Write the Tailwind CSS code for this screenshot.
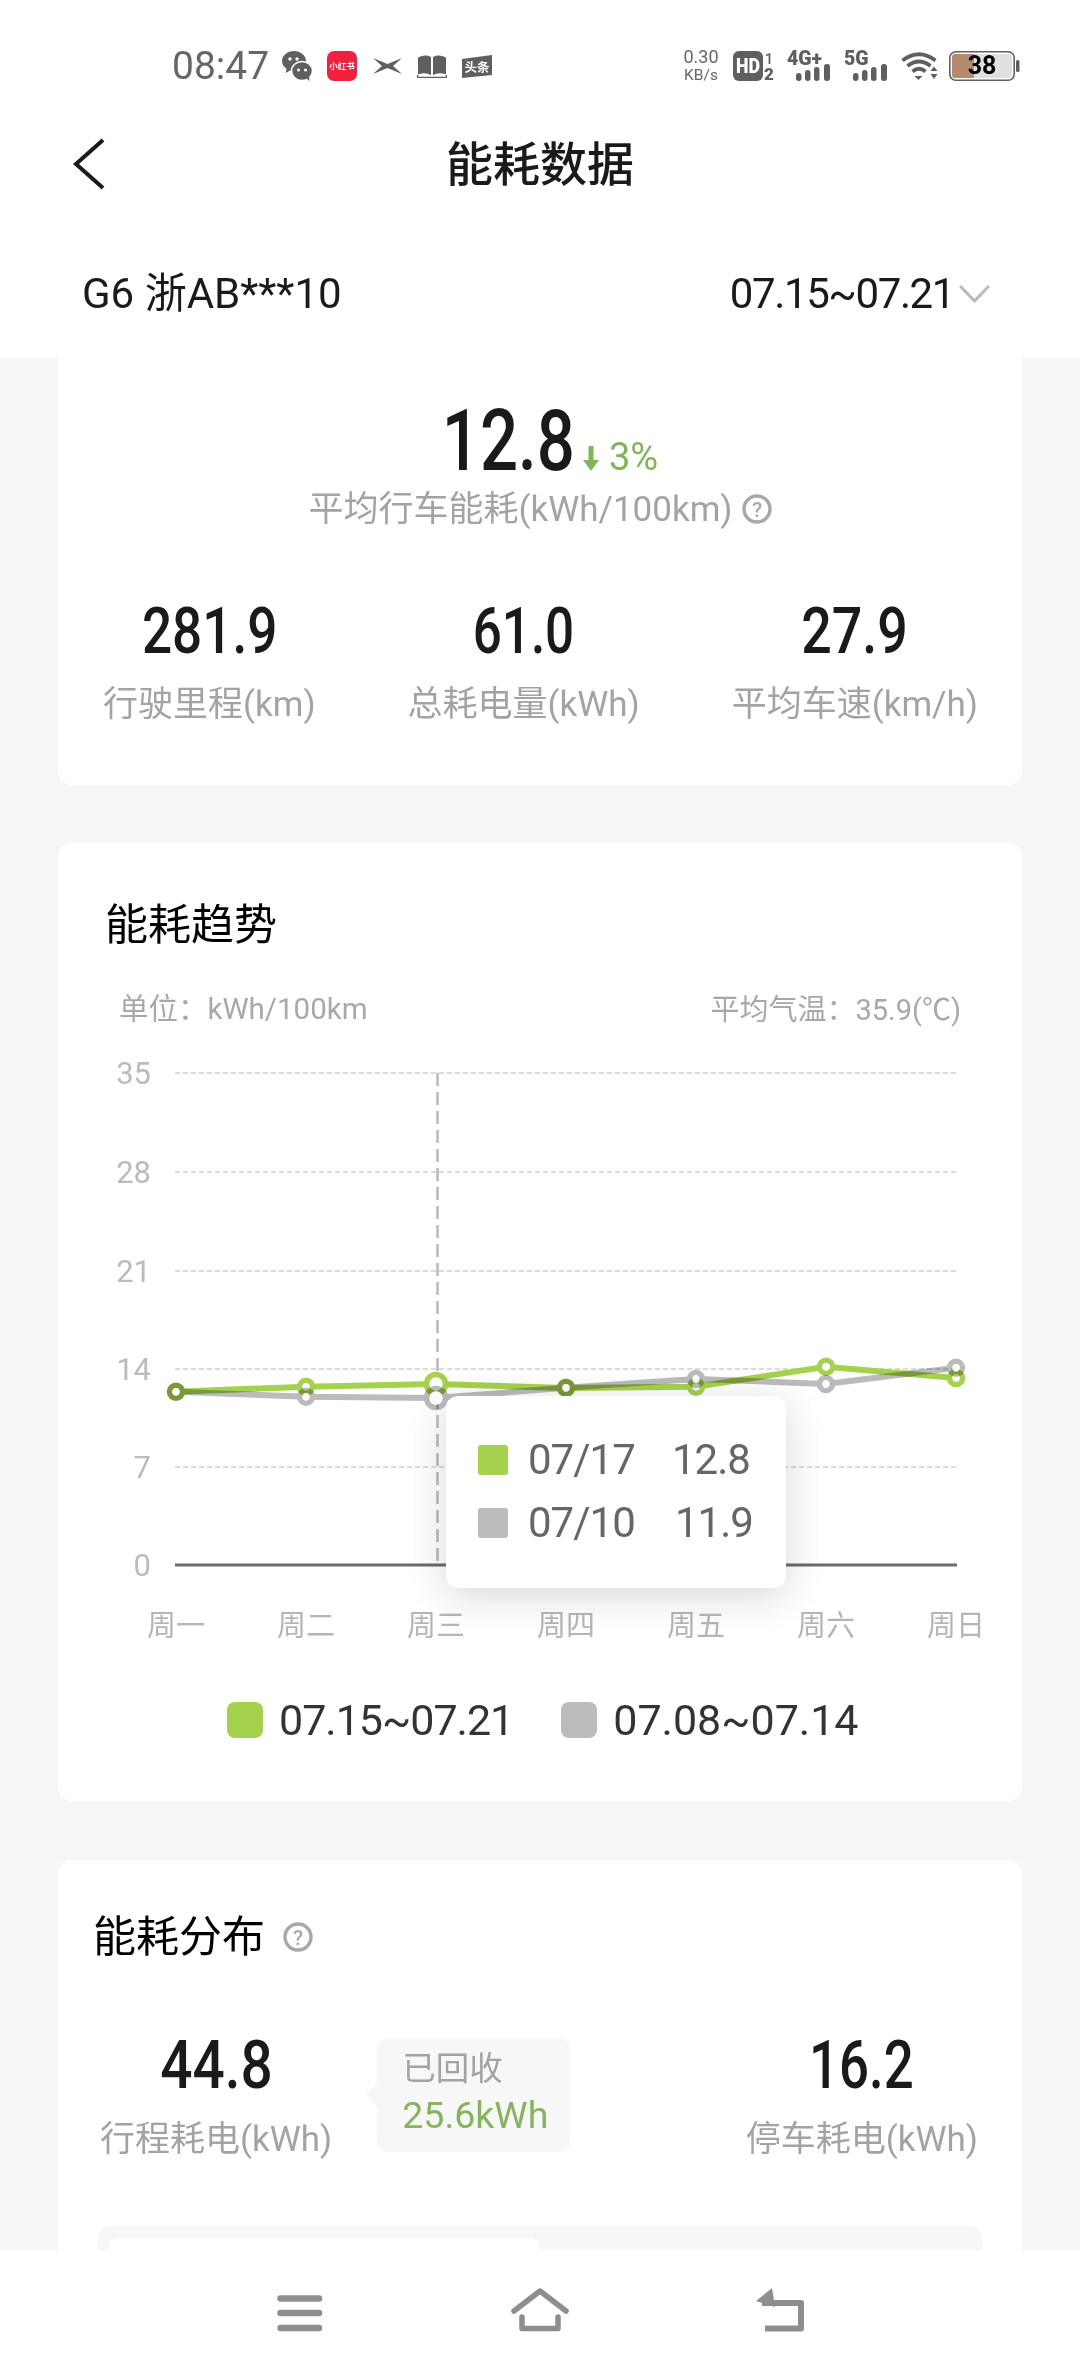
<!DOCTYPE html>
<html lang="zh-CN">
<head>
  <meta charset="UTF-8">
  <title>能耗数据</title>
  <script src="https://cdn.jsdelivr.net/npm/@tailwindcss/browser@4"></script>
</head>
<body class="bg-[#f6f6f6]">
  <div class="relative w-[1080px] h-[2376px] overflow-hidden flex flex-col bg-[#f6f6f6] text-[#1a1a1a] font-[Roboto,'Noto_Sans_CJK_SC',sans-serif]">

    <!-- header -->
    <header class="bg-white h-[358px] shrink-0">
      <!-- status bar -->
      <div class="h-[132px] flex items-center pl-[172px] pr-[60px]">
        <span class="text-[39px] leading-none text-[#666] w-[95px] whitespace-nowrap">08:47</span>
        <svg class="ml-[15px]" width="30" height="30" viewBox="0 0 30 30"><path fill="#5f5f5f" d="M12 0C5.4 0 0 4.5 0 10c0 3.2 1.8 6 4.6 7.8L3.6 22l4.6-2.5c1.2.3 2.500.5 3.800.5 6.600 0 12-4.500 12-10S18.600 0 12 0z"/><ellipse cx="20" cy="20" rx="10.500" ry="9.500" fill="#5f5f5f" stroke="#fff" stroke-width="1.500"/><path fill="#5f5f5f" d="M24 27l3.500 3-.5-5z"/><circle cx="8" cy="8" r="1.700" fill="#fff"/><circle cx="15" cy="8" r="1.700" fill="#fff"/><circle cx="16.500" cy="19" r="1.500" fill="#fff"/><circle cx="23.500" cy="19" r="1.500" fill="#fff"/></svg>
        <div class="ml-[15px] w-[30px] h-[30px] rounded-[7px] bg-[#f0213f] flex items-center justify-center text-white text-[8.500px] font-bold leading-none whitespace-nowrap">小红书</div>
        <svg class="ml-[16px]" width="29" height="16" viewBox="0 0 29 16"><path fill="#5f5f5f" d="M0 0l14.500 6L29 0l-9 8 9 8-14.500-6L0 16l9-8z"/></svg>
        <svg class="ml-[15px]" width="30" height="25" viewBox="0 0 30 25"><path fill="#5f5f5f" d="M1 3.500Q8 0 14 3v18q-6-3-13-.5zM16 3q6-3 13 .5v17q-7-2.500-13 .5z"/><path fill="none" stroke="#5f5f5f" stroke-width="1.200" d="M.6 21v2.400h28.800V21"/></svg>
        <svg class="ml-[15px]" width="30" height="23" viewBox="0 0 30 23"><path fill="#5f5f5f" d="M0 4L30 0v20L0 23z"/><text x="15" y="17" text-anchor="middle" font-size="12.500" font-weight="700" fill="#fff">头条</text></svg>

        <div class="ml-auto flex items-center">
          <div class="w-[36px] flex flex-col items-center text-[#666] leading-none whitespace-nowrap">
            <span class="text-[18px]">0.30</span>
            <span class="text-[15.500px] mt-[2px]">KB/s</span>
          </div>
          <svg class="ml-[14px] -mb-[6px]" width="42" height="36" viewBox="0 0 42 36"><rect width="30" height="30" rx="6" fill="#5f5f5f"/><text x="15" y="21.500" text-anchor="middle" font-size="20" font-weight="900" fill="#fff" textLength="24" lengthAdjust="spacingAndGlyphs">HD</text><text x="36" y="13" text-anchor="middle" font-size="15" font-weight="500" fill="#5f5f5f">1</text><text x="36" y="29" text-anchor="middle" font-size="17" font-weight="900" fill="#5f5f5f">2</text></svg>
          <svg class="ml-[12px] -mt-[8px]" width="44" height="38" viewBox="0 -8 44 38"><text x="0" y="14" font-size="19.500" font-weight="900" fill="#5f5f5f">4G+</text><g fill="#5f5f5f"><rect x="9" y="22" width="5.500" height="8" rx="2.700"/><rect x="18" y="19" width="5.500" height="11" rx="2.700"/><rect x="27" y="16" width="5.500" height="14" rx="2.700"/><rect x="37" y="13" width="6" height="17" rx="2.700"/></g></svg>
          <svg class="ml-[13px] -mt-[8px]" width="44" height="38" viewBox="0 -8 44 38"><text x="0" y="14" font-size="19.500" font-weight="900" fill="#5f5f5f">5G</text><g fill="#5f5f5f"><rect x="9" y="22" width="5.500" height="8" rx="2.700"/><rect x="18" y="19" width="5.500" height="11" rx="2.700"/><rect x="27" y="16" width="5.500" height="14" rx="2.700"/><rect x="37" y="13" width="6" height="17" rx="2.700"/></g></svg>
          <svg class="ml-[13px]" width="37" height="28" viewBox="0 0 37 28"><g fill="none" stroke="#5f5f5f" stroke-width="3.800"><path d="M1.500 8.500Q18-4 34.500 8.500"/><path d="M6.500 14Q18 5 29.500 14"/><path d="M11.500 19.500Q18 14 24.500 19.500"/></g><path fill="#5f5f5f" d="M13.500 24h8l-4 4zM29.500 19l3.500-4.500 3.500 4.500zM29.500 22h7l-3.500 5z"/></svg>
          <svg class="ml-[11px]" width="71" height="30" viewBox="0 0 71 30"><rect x=".8" y=".8" width="64.400" height="28.400" rx="6" fill="#fff" stroke="#5f5f5f" stroke-width="1.600"/><rect x="3" y="3" width="60" height="24" rx="3" fill="#e0e0e0"/><path fill="#b58a6f" d="M6 3h19v24H6a3 3 0 0 1-3-3V6a3 3 0 0 1 3-3z"/><rect x="67" y="9" width="3.500" height="12" rx="1.500" fill="#5f5f5f"/><text x="33" y="23" text-anchor="middle" font-size="25" font-weight="700" fill="#000">38</text></svg>
        </div>
      </div>

      <!-- title bar -->
      <div class="h-[64px] grid grid-cols-[1fr_auto_1fr] items-center">
        <svg class="ml-[72px]" width="34" height="52" viewBox="0 0 34 52"><path fill="none" stroke="#1a1a1a" stroke-width="4" d="M31 2L4 26l27 24"/></svg>
        <h1 class="text-[47px] leading-none font-medium">能耗数据</h1>
      </div>

      <!-- vehicle + date range -->
      <div class="mt-[68px] h-[60px] flex items-center justify-between pl-[82px] pr-[90px]">
        <span class="text-[42px] leading-none whitespace-nowrap">G6 浙AB***10</span>
        <div class="flex items-center gap-[5px]">
          <span class="text-[42px] leading-none tracking-[-1.400px] whitespace-nowrap">07.15~07.21</span>
          <svg width="31" height="18" viewBox="0 0 31 18"><path fill="none" stroke="#b8b8b8" stroke-width="3" d="M1 1l14.500 15L30 1"/></svg>
        </div>
      </div>
    </header>

    <main class="flex-1 overflow-hidden px-[58px]">
      <!-- summary -->
      <section class="bg-white rounded-b-[14px] pt-[46px] pb-[58px]">
        <div class="h-[77px] flex items-end pl-[386px] pb-[3px]">
          <div class="w-[128px] flex justify-center">
            <span class="shrink-0 text-[86px] leading-[74px] font-medium scale-x-[.78]">12.8</span>
          </div>
          <svg class="ml-[11px] mb-[7px]" width="16" height="25" viewBox="0 0 16 25"><path fill="#82b55a" d="M5.500 0h5v14H16l-8 11-8-11h5.500z"/></svg>
          <span class="ml-[10px] mb-[2px] text-[38px] leading-none text-[#82b55a]">3%</span>
        </div>
        <div class="mt-[6px] h-[44px] flex items-center justify-center gap-[9px] text-[#a3a3a3] text-[35px] leading-none whitespace-nowrap">
          <span>平均行车能耗(kWh/100km)</span>
          <svg width="30" height="30" viewBox="0 0 30 30"><circle cx="15" cy="15" r="13" fill="none" stroke="#a8a8a8" stroke-width="3.400"/><text x="15" y="22.500" text-anchor="middle" font-size="21" font-weight="500" fill="#a8a8a8">?</text></svg>
        </div>
        <div class="mt-[68px] flex justify-between pl-[45px] pr-[44px]">
          <div class="flex flex-col items-center">
            <div class="w-[133px] h-[66px] flex justify-center"><span class="shrink-0 text-[64px] leading-[66px] font-medium scale-x-[.83]">281.9</span></div>
            <span class="mt-[18px] h-[44px] text-[35px] leading-[44px] text-[#a3a3a3] whitespace-nowrap">行驶里程(km)</span>
          </div>
          <div class="flex flex-col items-center">
            <div class="w-[100px] h-[66px] flex justify-center"><span class="shrink-0 text-[64px] leading-[66px] font-medium scale-x-[.8]">61.0</span></div>
            <span class="mt-[18px] h-[44px] text-[35px] leading-[44px] text-[#a3a3a3] whitespace-nowrap">总耗电量(kWh)</span>
          </div>
          <div class="flex flex-col items-center">
            <div class="w-[104px] h-[66px] flex justify-center"><span class="shrink-0 text-[64px] leading-[66px] font-medium scale-x-[.84]">27.9</span></div>
            <span class="mt-[18px] h-[44px] text-[35px] leading-[44px] text-[#a3a3a3] whitespace-nowrap">平均车速(km/h)</span>
          </div>
        </div>
      </section>

      <!-- trend chart -->
      <section class="mt-[58px] bg-white rounded-[14px] pt-[57px] pb-[61px]">
        <h2 class="pl-[47px] h-[50px] text-[43px] leading-[50px] text-black">能耗趋势</h2>
        <div class="mt-[40px] h-[40px] flex items-center justify-between pl-[61px] pr-[61px] text-[29.500px] leading-none text-[#a8a8a8] whitespace-nowrap">
          <span>单位：kWh/100km</span>
          <span class="text-[29px]">平均气温：35.9(℃)</span>
        </div>
        <div class="relative mt-[20px] h-[620px]">
          <svg class="block" width="964" height="620" viewBox="58 1050 964 620">
            <g fill="none" stroke="#cfcfcf" stroke-width="1.500" stroke-dasharray="5 3">
              <path d="M175 1073H956M175 1172H956M175 1271H956M175 1369H956M175 1467H956"/>
            </g>
            <path d="M437.500 1073V1565" fill="none" stroke="#b9b9be" stroke-width="2.500" stroke-dasharray="13 6"/>
            <path d="M175 1565H957" fill="none" stroke="#6b6b70" stroke-width="3"/>
            <g font-size="31" fill="#bbbbbb" text-anchor="end">
              <text x="151" y="1084">35</text>
              <text x="151" y="1183">28</text>
              <text x="151" y="1282">21</text>
              <text x="151" y="1380">14</text>
              <text x="151" y="1478">7</text>
              <text x="151" y="1576">0</text>
            </g>
            <g font-size="29" fill="#b5b5b5" text-anchor="middle">
              <text x="176" y="1636">周一</text>
              <text x="306" y="1636">周二</text>
              <text x="436" y="1636">周三</text>
              <text x="566" y="1636">周四</text>
              <text x="696" y="1636">周五</text>
              <text x="826" y="1636">周六</text>
              <text x="956" y="1636">周日</text>
            </g>
            <g fill="none" stroke="#a5d24d" stroke-width="6">
              <path d="M176 1391.700L306 1386.700 436 1384 566 1388 696 1386.700 826 1366.700 956 1378"/>
              <g fill="#fff" stroke-width="5.500">
                <circle cx="176" cy="1391.700" r="6.500"/><circle cx="306" cy="1386.700" r="6.500"/><circle cx="436" cy="1384" r="9.500"/><circle cx="566" cy="1388" r="6.500"/><circle cx="696" cy="1386.700" r="6.500"/><circle cx="826" cy="1366.700" r="6.500"/><circle cx="956" cy="1378" r="6.500"/>
              </g>
            </g>
            <g class="mix-blend-multiply" fill="none" stroke="#bbbbbb" stroke-width="6">
              <path d="M176 1391.700L306 1396.700 436 1398 566 1387.700 696 1379 826 1384 956 1367.700"/>
              <g stroke-width="5.500">
                <circle cx="176" cy="1391.700" r="6.500"/><circle cx="306" cy="1396.700" r="6.500"/><circle cx="436" cy="1398" r="9.500"/><circle cx="566" cy="1387.700" r="6.500"/><circle cx="696" cy="1379" r="6.500"/><circle cx="826" cy="1384" r="6.500"/><circle cx="956" cy="1367.700" r="6.500"/>
              </g>
            </g>
            <g fill="#fff">
              <circle cx="176" cy="1391.700" r="3.700"/><circle cx="306" cy="1396.700" r="3.700"/><circle cx="436" cy="1398" r="6.700"/><circle cx="566" cy="1387.700" r="3.700"/><circle cx="696" cy="1379" r="3.700"/><circle cx="826" cy="1384" r="3.700"/><circle cx="956" cy="1367.700" r="3.700"/><circle cx="826" cy="1366.700" r="3.700"/>
            </g>
          </svg>
          <!-- tooltip -->
          <div class="absolute left-[388px] top-[346px] w-[340px] h-[192px] bg-white rounded-[12px] shadow-[0_8px_40px_rgba(0,0,0,0.16)] pt-[32px] pl-[32px] text-[42px] leading-[63px] text-[#666] tracking-[-1px] whitespace-nowrap">
            <div class="flex items-center h-[63px]">
              <span class="w-[30px] h-[30px] rounded-[3px] bg-[#a5d24d]"></span>
              <span class="ml-[20px] w-[144px]">07/17</span>
              <span>12.8</span>
            </div>
            <div class="flex items-center h-[63px]">
              <span class="w-[30px] h-[30px] rounded-[3px] bg-[#bbbbbb]"></span>
              <span class="ml-[20px] w-[147px]">07/10</span>
              <span>11.9</span>
            </div>
          </div>
        </div>
        <div class="mt-[30px] h-[40px] flex items-center pl-[169px] text-[43px] leading-none text-[#333] whitespace-nowrap">
          <span class="w-[36px] h-[36px] rounded-[8px] bg-[#a5d24d]"></span>
          <span class="ml-[16px] tracking-[-1px]">07.15~07.21</span>
          <span class="ml-[48px] w-[36px] h-[36px] rounded-[8px] bg-[#bbbbbb]"></span>
          <span class="ml-[16px]">07.08~07.14</span>
        </div>
      </section>

      <!-- distribution -->
      <section class="mt-[59px] bg-white rounded-t-[14px] pt-[52px] pb-[40px]">
        <div class="pl-[35px] h-[50px] flex items-center gap-[18px]">
          <h2 class="text-[43px] leading-[50px] text-black">能耗分布</h2>
          <svg width="30" height="30" viewBox="0 0 30 30"><circle cx="15" cy="15" r="13" fill="none" stroke="#a8a8a8" stroke-width="3.400"/><text x="15" y="22.500" text-anchor="middle" font-size="21" font-weight="500" fill="#a8a8a8">?</text></svg>
        </div>
        <div class="mt-[69px] flex items-start pl-[42px] pr-[44px]">
          <div class="flex flex-col items-center">
            <div class="w-[112px] h-[70px] flex justify-center"><span class="shrink-0 text-[66px] leading-[70px] font-medium scale-x-[.86]">44.8</span></div>
            <span class="mt-[17px] h-[44px] text-[35px] leading-[44px] text-[#a3a3a3] whitespace-nowrap">行程耗电(kWh)</span>
          </div>
          <div class="relative ml-[45px] mt-[7px] w-[193px] h-[114px] bg-[#f7f7f7] rounded-[12px] pl-[25px] pt-[8px] text-[33.500px] leading-[46px]">
            <span class="absolute -left-[8px] top-[48px] w-[18px] h-[18px] rotate-45 bg-[#f7f7f7]"></span>
            <div class="relative text-[#a3a3a3]">已回收</div>
            <div class="relative text-[37.500px] text-[#86b45c] whitespace-nowrap">25.6kWh</div>
          </div>
          <div class="ml-auto flex flex-col items-center">
            <div class="w-[100px] h-[70px] flex justify-center"><span class="shrink-0 text-[66px] leading-[70px] font-medium scale-x-[.8]">16.2</span></div>
            <span class="mt-[17px] h-[44px] text-[35px] leading-[44px] text-[#a3a3a3] whitespace-nowrap">停车耗电(kWh)</span>
          </div>
        </div>
        <div class="mt-[64px] mx-[40px] h-[120px] bg-[#f7f7f7] rounded-[12px] pt-[12px] pl-[11px]">
          <div class="w-[430px] h-[100px] bg-white rounded-[8px]"></div>
        </div>
      </section>
    </main>

    <!-- nav bar -->
    <nav class="absolute left-0 right-0 bottom-0 h-[126px] bg-white">
      <svg class="block" width="1080" height="126" viewBox="0 2250 1080 126">
        <g fill="none" stroke="#8e8e8e" stroke-width="6.500" stroke-linecap="round">
          <path d="M280.500 2298.500H319M280.500 2313H319M280.500 2328H319"/>
        </g>
        <path fill="none" stroke="#8e8e8e" stroke-width="5.500" stroke-linejoin="round" stroke-linecap="round" d="M514 2311L540 2291 566 2311M522 2317V2328.500H558V2317"/>
        <path fill="none" stroke="#8e8e8e" stroke-width="6" stroke-linejoin="round" d="M762 2303H801V2328.500H765"/>
        <path fill="#8e8e8e" d="M772 2288l3 19-19-6z"/>
      </svg>
    </nav>
  </div>
</body>
</html>
